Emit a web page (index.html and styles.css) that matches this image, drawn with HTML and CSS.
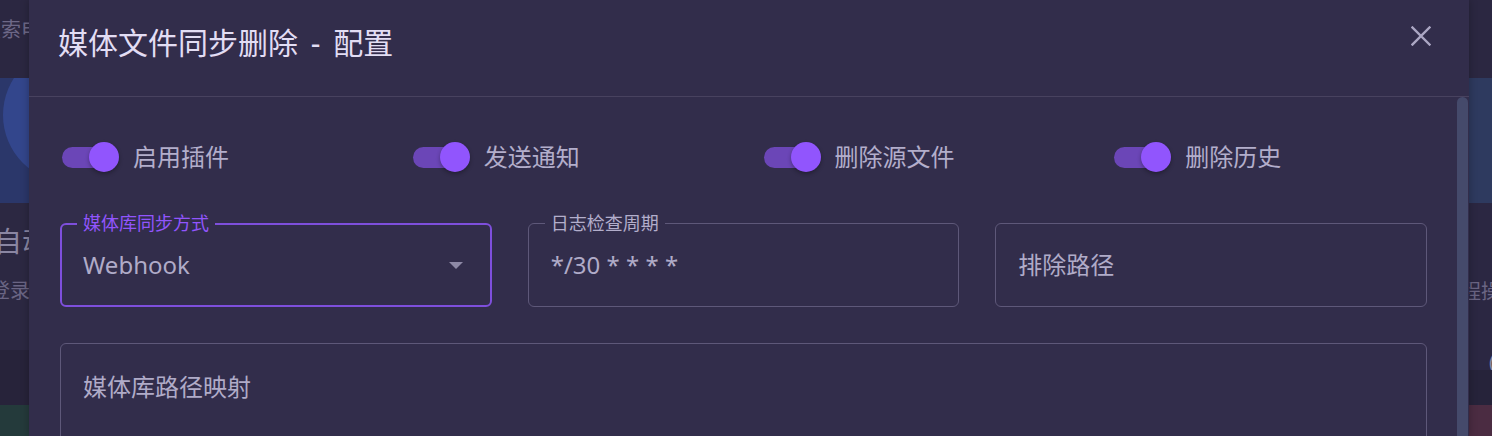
FILE: index.html
```html
<!DOCTYPE html>
<html lang="zh-CN">
<head>
<meta charset="utf-8">
<title>媒体文件同步删除 - 配置</title>
<link rel="stylesheet" href="styles.css">
</head>
<body>
<div class="backdrop">
  <div class="bg-col bg-left">
    <div class="blk blk-top"><span class="bg-text t-search">搜索电</span></div>
    <div class="blk blk-blue"><div class="blob"></div></div>
    <div class="blk blk-card">
      <span class="bg-text t-big">自动</span>
      <span class="bg-text t-small">登录</span>
    </div>
    <div class="blk blk-dark"></div>
    <div class="blk blk-green"></div>
  </div>
  <div class="bg-col bg-right">
    <div class="blk blk-top"></div>
    <div class="blk blk-blue2"></div>
    <div class="blk blk-card2">
      <span class="bg-text t-small2">程操作</span>
      <span class="bg-text t-paren">(</span>
    </div>
    <div class="blk blk-dark2"></div>
    <div class="blk blk-red"></div>
  </div>
</div>

<div class="dialog">
  <header class="dialog-head">
    <h2 class="dialog-title">媒体文件同步删除 - 配置</h2>
    <button class="close" aria-label="关闭">
      <svg width="20" height="20" viewBox="0 0 20 20"><path d="M1.5 1.5 L18.5 18.5 M18.5 1.5 L1.5 18.5" stroke="currentColor" stroke-width="2.4" stroke-linecap="square" fill="none"/></svg>
    </button>
  </header>
  <div class="dialog-body">
    <div class="content">
      <div class="switch-row">
        <div class="switch-item"><div class="switch"><div class="track"></div><div class="thumb"></div></div><span class="switch-label">启用插件</span></div>
        <div class="switch-item"><div class="switch"><div class="track"></div><div class="thumb"></div></div><span class="switch-label">发送通知</span></div>
        <div class="switch-item"><div class="switch"><div class="track"></div><div class="thumb"></div></div><span class="switch-label">删除源文件</span></div>
        <div class="switch-item"><div class="switch"><div class="track"></div><div class="thumb"></div></div><span class="switch-label">删除历史</span></div>
      </div>
      <div class="field-row">
        <div class="field focused">
          <span class="field-label">媒体库同步方式</span>
          <span class="field-value">Webhook</span>
          <span class="caret"></span>
        </div>
        <div class="field">
          <span class="field-label muted">日志检查周期</span>
          <span class="field-value">*/30 * * * *</span>
        </div>
        <div class="field">
          <span class="field-value">排除路径</span>
        </div>
      </div>
      <div class="textarea">
        <span class="field-value">媒体库路径映射</span>
      </div>
    </div>
    <div class="scrollbar"><div class="scroll-thumb"></div></div>
  </div>
</div>
</body>
</html>
```

FILE: styles.css
```css
* { box-sizing: border-box; }

html, body {
  margin: 0;
  width: 1492px;
  height: 436px;
  overflow: hidden;
  background: #28243d;
  font-family: "Noto Sans", "Noto Sans CJK SC", sans-serif;
}

/* ---------- page behind the dialog ---------- */
.backdrop {
  display: flex;
  justify-content: space-between;
  height: 436px;
  overflow: hidden;
}

.bg-col {
  display: flex;
  flex-direction: column;
  overflow: hidden;
}

.bg-left { width: 44px; }
.bg-right { width: 50px; }

.blk { position: relative; overflow: hidden; }

.blk-top { height: 78px; background: #2b2741; display: flex; align-items: center; }
.blk-blue { height: 125px; background: #2b376a; }
.blk-card { height: 147px; background: #2c2842; display: flex; flex-direction: column; }
.blk-dark { height: 55px; background: #27233a; }
.blk-green { flex: 1; background: #243a3b; }

.blk-blue2 { height: 125px; background: #2e3a5f; }
.blk-card2 { height: 167px; background: #2b2742; display: flex; flex-direction: column; }
.blk-dark2 { height: 35px; background: #26233a; }
.blk-red { flex: 1; background: #4b2c42; }

.blob {
  position: absolute;
  left: 3px;
  top: -31px;
  width: 136px;
  height: 136px;
  border-radius: 50%;
  background: #33468c;
}

.bg-text {
  white-space: nowrap;
  display: block;
}

.t-search {
  font-size: 20px;
  line-height: 20px;
  color: #6d6887;
  margin-left: -19px;
  margin-top: -18px;
}

.t-big {
  font-size: 28px;
  line-height: 28px;
  color: #8a86a2;
  margin-top: 24px;
  margin-left: -6px;
}

.t-small {
  font-size: 20px;
  line-height: 20px;
  color: #6a6584;
  margin-top: 26px;
  margin-left: -10px;
}

.t-small2 {
  font-size: 20px;
  line-height: 20px;
  color: #6a6584;
  margin-top: 79px;
  margin-left: 19px;
}

.t-paren {
  font-size: 20px;
  line-height: 20px;
  color: #8a86a2;
  margin-top: 50px;
  margin-left: 47px;
}

/* ---------- dialog ---------- */
.dialog {
  position: absolute;
  top: 0;
  left: 29px;
  width: 1440px;
  height: 436px;
  background: #322d4b;
  box-shadow: 0 0 8px rgba(0, 0, 0, 0.28);
  display: flex;
  flex-direction: column;
  overflow: hidden;
}

.dialog-head {
  height: 97px;
  border-bottom: 1px solid #48425f;
  display: flex;
  justify-content: space-between;
  align-items: flex-start;
  padding: 0 38px 0 29px;
  flex: none;
}

.dialog-title {
  margin: 0;
  font-size: 30px;
  line-height: 86px;
  font-weight: 400;
  color: #e2ddf4;
  word-spacing: 5px;
}

.close {
  margin-top: 26px;
  width: 20px;
  height: 20px;
  padding: 0;
  border: 0;
  background: none;
  color: #aca7c4;
  display: block;
}

.close svg { display: block; }

.dialog-body {
  flex: 1;
  display: flex;
  min-height: 0;
  overflow: hidden;
}

.content {
  flex: 1;
  padding: 30px 30px 0 31px;
  overflow: hidden;
}

.scrollbar {
  width: 12px;
  padding-right: 1px;
}

.scroll-thumb {
  width: 11px;
  height: 100%;
  background: #454a6b;
  border-radius: 6px 6px 0 0;
}

/* ---------- switches ---------- */
.switch-row {
  display: grid;
  grid-template-columns: repeat(4, 1fr);
  column-gap: 36px;
  height: 60px;
}

.switch-item {
  display: flex;
  align-items: center;
}

.switch {
  position: relative;
  width: 57px;
  height: 30px;
  margin-left: 2px;
  display: flex;
  align-items: center;
}

.track {
  width: 50px;
  height: 21px;
  border-radius: 11px;
  background: #6b46b7;
}

.thumb {
  position: absolute;
  left: 27px;
  top: 0;
  width: 30px;
  height: 30px;
  border-radius: 50%;
  background: #9155fd;
  box-shadow: 0 2px 4px rgba(0, 0, 0, 0.3);
}

.switch-label {
  margin-left: 14px;
  font-size: 24px;
  line-height: 30px;
  color: #b3aecb;
}

/* ---------- fields ---------- */
.field-row {
  display: grid;
  grid-template-columns: repeat(3, 1fr);
  column-gap: 36px;
  margin-top: 36px;
}

.field {
  position: relative;
  height: 84px;
  border: 1px solid #5e5879;
  border-radius: 6px;
  display: flex;
  align-items: center;
  padding: 0 22px 0 22px;
}

.field.focused {
  border: 2px solid #7e4fdc;
  padding-left: 21px;
}

.field-label {
  position: absolute;
  top: -10px;
  left: 16px;
  padding: 0 6px;
  background: #322d4b;
  font-size: 18px;
  line-height: 18px;
  color: #b3aecb;
  white-space: nowrap;
}

.field.focused .field-label {
  top: -11px;
  left: 15px;
  color: #9155fd;
}

.field-value {
  font-size: 24px;
  line-height: 24px;
  color: #b0abc8;
  white-space: nowrap;
}

.caret {
  margin-left: auto;
  margin-right: 5px;
  width: 0;
  height: 0;
  border-left: 7px solid transparent;
  border-right: 7px solid transparent;
  border-top: 7px solid #8e89a6;
}

.textarea {
  margin-top: 36px;
  height: 140px;
  border: 1px solid #5e5879;
  border-radius: 6px;
  padding: 31px 22px 0 22px;
}

.textarea .field-value { display: block; }
```
